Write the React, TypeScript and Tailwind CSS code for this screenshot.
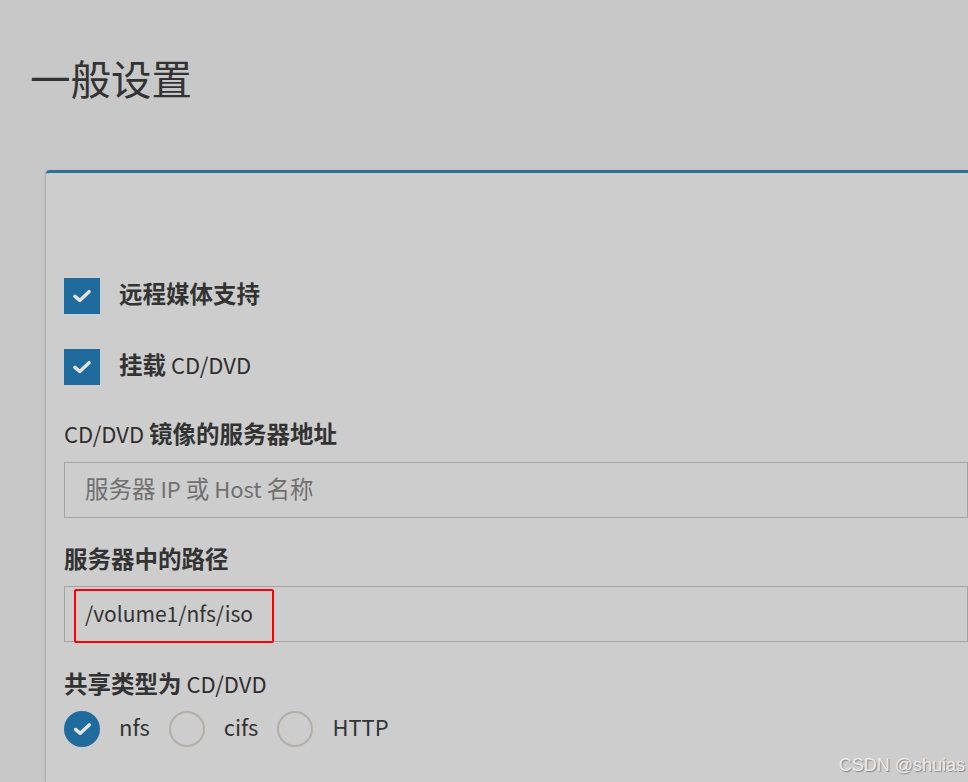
import React from "react";

const font = { fontFamily: '"Noto Sans CJK SC", "Noto Sans", sans-serif' };

function Check({ size = 20 }: { size?: number }) {
  return (
    <svg width={size} height={Math.round(size * 0.72)} viewBox="0 0 18 13" fill="none">
      <path d="M2.4 6.9 L6.9 10.6 L15.6 2.5" stroke="#e4e4e4" strokeWidth="3.2" strokeLinecap="round" strokeLinejoin="round" />
    </svg>
  );
}

function Zh({ children }: { children: React.ReactNode }) {
  return <span className="text-[23.5px]">{children}</span>;
}

function Checkbox({ label }: { label: React.ReactNode }) {
  return (
    <div className="flex items-center h-[36px]">
      <div className="w-[36px] h-[36px] bg-[#1f6b9d] flex items-center justify-center">
        <Check />
      </div>
      <div className="ml-[19px] pb-[6px] text-[22px] leading-[30px] font-bold text-[#333333]">{label}</div>
    </div>
  );
}

function Radio({ label, checked }: { label: string; checked?: boolean }) {
  return (
    <div className="flex items-center h-[36px]">
      {checked ? (
        <div className="w-[36px] h-[36px] rounded-full bg-[#1f6b9d] flex items-center justify-center">
          <Check size={19} />
        </div>
      ) : (
        <div className="w-[36px] h-[36px] rounded-full border-2 border-[#b3afa8]" />
      )}
      <div className="ml-[19px] pb-[6px] text-[22px] leading-[30px] text-[#333333]">{label}</div>
    </div>
  );
}

export default function App() {
  return (
    <div style={font} className="w-[968px] h-[782px] bg-[#c8c8c8] overflow-hidden relative flex flex-col">
      <div className="pl-[30px] pt-[53px] h-[170px]">
        <h1 className="text-[40.5px] leading-[50px] font-normal text-[#333333]">一般设置</h1>
      </div>
      <div className="ml-[46px] flex-1 bg-[#cdcdcd] border-t-[3px] border-[#2d7098] rounded-tl-[4px] shadow-[-1px_0_2px_rgba(0,0,0,0.15)] pl-[18px] flex flex-col">
        <div className="pt-[105px]">
          <Checkbox label={<Zh>远程媒体支持</Zh>} />
        </div>
        <div className="mt-[35px]">
          <Checkbox
            label={
              <>
                <Zh>挂载</Zh> <span className="font-normal text-[#2e2e2e]">CD/DVD</span>
              </>
            }
          />
        </div>
        <div className="mt-[36px] h-[30px] text-[22px] leading-[24px] font-bold text-[#333333]">
          <span className="font-normal text-[#2e2e2e]">CD/DVD</span> <Zh>镜像的服务器地址</Zh>
        </div>
        <div className="mt-[11px] h-[56px] border border-[#a3a3a3] flex items-center pl-[20px] pb-[3px] text-[22px] text-[#707070]">
          <Zh>服务器</Zh>&nbsp;IP&nbsp;<Zh>或</Zh>&nbsp;Host&nbsp;<Zh>名称</Zh>
        </div>
        <div className="mt-[28px] h-[30px] text-[22px] leading-[24px] font-bold text-[#333333]">
          <Zh>服务器中的路径</Zh>
        </div>
        <div className="mt-[10px] h-[56px] border border-[#a3a3a3] flex items-center pl-[20px] text-[21px] text-[#333333] relative">
          /volume1/nfs/iso
          <div className="absolute left-[9px] top-[2px] w-[200px] h-[54px] border-2 border-[#ff0000] rounded-[2px]" />
        </div>
        <div className="mt-[29px] h-[30px] text-[22px] leading-[24px] font-bold text-[#333333]">
          <Zh>共享类型为</Zh> <span className="font-normal text-[#2e2e2e]">CD/DVD</span>
        </div>
        <div className="mt-[10px] flex items-center">
          <Radio label="nfs" checked />
          <div className="ml-[19px]">
            <Radio label="cifs" />
          </div>
          <div className="ml-[19px]">
            <Radio label="HTTP" />
          </div>
        </div>
      </div>
      <div
        className="absolute right-[3px] bottom-[6px] text-[18px] leading-[22px] text-[#ececec]"
        style={{ fontFamily: '"Liberation Sans", Arial, sans-serif', textShadow: "1px 1px 1px rgba(0,0,0,0.35)" }}
      >
        CSDN @shuias
      </div>
    </div>
  );
}
